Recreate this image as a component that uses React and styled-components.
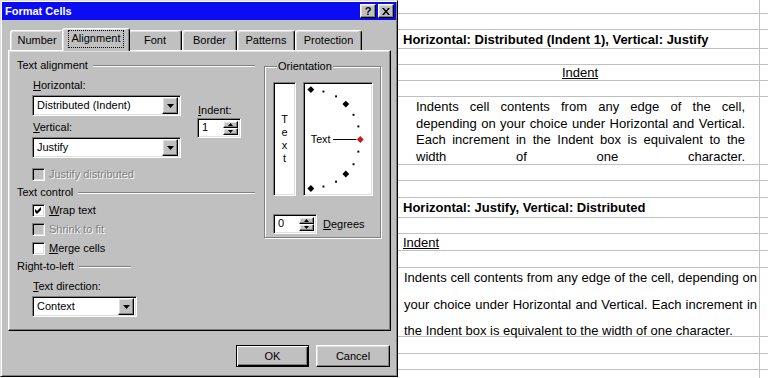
import React from "react";
import styled, { createGlobalStyle, css } from "styled-components";

const GlobalStyle = createGlobalStyle`
  html, body { margin: 0; padding: 0; background: #fff; overflow: hidden; }
  #root { width: 768px; height: 378px; display: flex; overflow: hidden; }
`;

const raised = css`
  border: 1px solid;
  border-color: #fff #000 #000 #fff;
  box-shadow: inset -1px -1px #808080, inset 1px 1px #dfdfdf;
`;
const sunken = css`
  border: 1px solid;
  border-color: #808080 #fff #fff #808080;
  box-shadow: inset 1px 1px #000, inset -1px -1px #dfdfdf;
`;

const Dialog = styled.div`
  flex: none;
  width: 398px;
  height: 377px;
  box-sizing: border-box;
  background: #c0c0c0;
  border: 1px solid;
  border-color: #dfdfdf #000 #000 #dfdfdf;
  box-shadow: inset 1px 1px #fff, inset -1px -1px #808080;
  padding: 1px;
  display: flex;
  flex-direction: column;
  font: 11px "Liberation Sans", Arial, sans-serif;
  line-height: 13px;
  color: #000;
`;

const TitleBar = styled.div`
  height: 18px;
  flex: none;
  background: #0c0cf2;
  display: flex;
  align-items: center;
  justify-content: space-between;
  padding: 0 2px 0 3px;
`;

const Title = styled.span`
  color: #fff;
  font-weight: bold;
  font-size: 11px;
`;

const TitleButtons = styled.div`
  display: flex;
  gap: 2px;
`;

const TitleButton = styled.div`
  width: 16px;
  height: 14px;
  box-sizing: border-box;
  ${raised};
  background: #c0c0c0;
  display: flex;
  align-items: center;
  justify-content: center;
  font-weight: bold;
  font-size: 11px;
  line-height: 12px;
`;

const TabStrip = styled.div`
  margin-top: 8px;
  height: 22px;
  flex: none;
  display: flex;
  align-items: flex-end;
  padding-left: 8px;
`;

const Tab = styled.div`
  box-sizing: border-box;
  width: ${(p) => p.$w}px;
  height: ${(p) => (p.$active ? 23 : 20)}px;
  margin: 0 ${(p) => (p.$active ? -2 : 0)}px ${(p) => (p.$active ? -1 : 0)}px;
  position: relative;
  z-index: ${(p) => (p.$active ? 2 : 1)};
  background: #c0c0c0;
  border-top: 1px solid #fff;
  border-left: 1px solid #fff;
  border-right: 1px solid #000;
  box-shadow: inset -1px 0 #808080, inset 1px 1px #dfdfdf;
  border-radius: 3px 3px 0 0;
  display: flex;
  align-items: center;
  justify-content: center;
  padding-bottom: ${(p) => (p.$active ? 3 : 0)}px;
`;

const FocusLabel = styled.span`
  outline: 1px dotted #000;
  padding: 1px 3px 2px;
`;

const Panel = styled.div`
  box-sizing: border-box;
  margin-left: 6px;
  width: 383px;
  height: 281px;
  flex: none;
  background: #c0c0c0;
  border: 1px solid;
  border-color: #fff #000 #000 #fff;
  box-shadow: inset -1px -1px #808080, inset 1px 1px #dfdfdf;
  display: flex;
  padding: 8px 0 0 8px;
  gap: 9px;
`;

const LeftCol = styled.div`
  width: 238px;
  display: flex;
  flex-direction: column;
`;

const SectionHeader = styled.div`
  display: flex;
  align-items: center;
  gap: 5px;
  height: 13px;
  margin-top: ${(p) => p.$mt || 0}px;
`;

const Etch = styled.span`
  height: 0;
  border-top: 1px solid #808080;
  border-bottom: 1px solid #fff;
  ${(p) => (p.$w ? `width: ${p.$w}px; flex: none;` : "flex: 1;")}
`;

const Indented = styled.div`
  margin-left: 15px;
  display: flex;
  flex-direction: column;
`;

const Label = styled.div`
  height: 13px;
  padding-left: 1px;
  margin-top: ${(p) => p.$mt || 0}px;
  white-space: nowrap;
`;

const AlignRow = styled.div`
  display: flex;
  margin-top: 7px;
`;

const FieldCol = styled.div`
  display: flex;
  flex-direction: column;
`;

const IndentCol = styled.div`
  margin-left: 16px;
  padding-top: 25px;
  display: flex;
  flex-direction: column;
`;

const Combo = styled.div`
  box-sizing: border-box;
  width: ${(p) => p.$w}px;
  height: 21px;
  margin-top: ${(p) => p.$mt || 0}px;
  ${sunken};
  background: #fff;
  display: flex;
  align-items: center;
  padding: 2px;
`;

const FieldText = styled.span`
  flex: 1;
  padding-left: 2px;
  white-space: nowrap;
`;

const DropButton = styled.div`
  width: 16px;
  height: 17px;
  box-sizing: border-box;
  ${raised};
  background: #c0c0c0;
  display: flex;
  align-items: center;
  justify-content: center;
`;

const Spin = styled.div`
  box-sizing: border-box;
  width: 44px;
  height: 20px;
  margin-top: ${(p) => p.$mt || 0}px;
  ${sunken};
  background: #fff;
  display: flex;
  padding: 2px;
`;

const SpinButtons = styled.div`
  width: 15px;
  display: flex;
  flex-direction: column;
`;

const SpinButton = styled.div`
  flex: 1;
  box-sizing: border-box;
  ${raised};
  background: #c0c0c0;
  display: flex;
  align-items: center;
  justify-content: center;
`;

const CheckRow = styled.div`
  display: flex;
  align-items: center;
  gap: 4px;
  height: 13px;
  margin-top: ${(p) => p.$mt || 0}px;
  color: ${(p) => (p.$disabled ? "#808080" : "#000")};
  text-shadow: ${(p) => (p.$disabled ? "1px 1px #fff" : "none")};
`;

const CheckBox = styled.span`
  width: 13px;
  height: 13px;
  box-sizing: border-box;
  flex: none;
  ${sunken};
  background: ${(p) => (p.$disabled ? "#c0c0c0" : "#fff")};
  display: flex;
  align-items: center;
  justify-content: center;
`;

const GroupBox = styled.fieldset`
  box-sizing: border-box;
  margin: 1px 0 0;
  width: 117px;
  height: 178px;
  padding: 9px 0 0 8px;
  border: 1px solid #808080;
  box-shadow: inset 1px 1px #fff, 1px 1px #fff;
  min-width: 0;
`;

const Legend = styled.legend`
  padding: 0 1px;
  margin-left: 4px;
  background: #c0c0c0;
  line-height: 13px;
`;

const OrientRow = styled.div`
  display: flex;
  gap: 7px;
`;

const VerticalBox = styled.div`
  box-sizing: border-box;
  width: 23px;
  height: 114px;
  ${sunken};
  background: #fff;
  display: flex;
  flex-direction: column;
  align-items: center;
  justify-content: center;
`;

const StackLetter = styled.span`
  line-height: 13px;
  height: 13px;
`;

const DialBox = styled.div`
  box-sizing: border-box;
  width: 70px;
  height: 114px;
  ${sunken};
  background: #fff;
  padding: 2px;
  display: flex;
`;

const DegreesRow = styled.div`
  display: flex;
  align-items: center;
  gap: 6px;
  margin-top: 18px;
`;

const Footer = styled.div`
  display: flex;
  justify-content: flex-end;
  gap: 7px;
  margin-top: 14px;
  padding-right: 6px;
`;

const Button = styled.div`
  box-sizing: border-box;
  width: ${(p) => p.$w}px;
  height: 22px;
  background: #c0c0c0;
  display: flex;
  align-items: center;
  justify-content: center;
  ${(p) =>
    p.$default
      ? css`
          border: 1px solid #000;
          box-shadow: inset 1px 1px #fff, inset -1px -1px #000, inset -2px -2px #808080;
        `
      : raised};
`;

/* Spreadsheet */
const Sheet = styled.div`
  flex: 1;
  background: #fff;
  display: flex;
  flex-direction: column;
  overflow: hidden;
  font: 13px "Liberation Sans", Arial, sans-serif;
  color: #000;
`;

const Row = styled.div`
  flex: none;
  height: ${(p) => p.$h}px;
  box-sizing: border-box;
  border-bottom: 1px solid #c0c0c0;
  display: flex;
`;

const Cell = styled.div`
  width: 362px;
  flex: none;
  box-sizing: border-box;
  border-right: 1px solid #c0c0c0;
  display: flex;
  align-items: center;
  justify-content: ${(p) => (p.$center ? "center" : "flex-start")};
  padding: 0 2px 0 5px;
  line-height: 15px;
  font-weight: ${(p) => (p.$bold ? "bold" : "normal")};
  white-space: nowrap;
`;

const ParaCell = styled.div`
  width: 362px;
  flex: none;
  box-sizing: border-box;
  border-right: 1px solid #c0c0c0;
  display: flex;
  flex-direction: column;
  gap: ${(p) => p.$gap}px;
  padding: ${(p) => p.$pad};
  line-height: ${(p) => p.$lh}px;
`;

const JustLine = styled.div`
  text-align: justify;
  text-align-last: ${(p) => (p.$last ? "left" : "justify")};
  white-space: normal;
`;

const Arrow = ({ up }) => (
  <svg width="7" height="4" viewBox="0 0 7 4">
    <polygon points={up ? "3.5,0 7,4 0,4" : "0,0 7,0 3.5,4"} fill="#000" />
  </svg>
);

const SmallArrow = ({ up }) => (
  <svg width="5" height="3" viewBox="0 0 5 3">
    <polygon points={up ? "2.5,0 5,3 0,3" : "0,0 5,0 2.5,3"} fill="#000" />
  </svg>
);

const CheckMark = () => (
  <svg width="7" height="7" viewBox="0 0 7 7">
    <polygon points="0,2 2,4 6,0 6,3 2,7 0,5" fill="#000" />
  </svg>
);

const Dial = () => {
  const cx = 5;
  const cy = 54;
  const r = 51;
  const big = [90, 45, -45, -90];
  const small = [75, 60, 30, 15, -15, -30, -60, -75];
  const pt = (a) => [cx + r * Math.cos((a * Math.PI) / 180), cy - r * Math.sin((a * Math.PI) / 180)];
  const diamond = (x, y, s = 3.5) => `${x},${y - s} ${x + s},${y} ${x},${y + s} ${x - s},${y}`;
  return (
    <svg width="66" height="110" viewBox="0 0 66 110">
      {big.map((a) => {
        const [x, y] = pt(a);
        return <polygon key={a} points={diamond(x, y)} fill="#000" />;
      })}
      {small.map((a) => {
        const [x, y] = pt(a);
        return <rect key={a} x={Math.round(x) - 1} y={Math.round(y) - 1} width="2" height="2" fill="#000" />;
      })}
      <text x="5" y="58" fontFamily="Liberation Sans, Arial, sans-serif" fontSize="11" fill="#000">
        Text
      </text>
      <line x1="28" y1="54.5" x2="52" y2="54.5" stroke="#000" strokeWidth="1" />
      <polygon points={diamond(56, 54.5)} fill="#c41a1a" />
    </svg>
  );
};

const tabs = [
  { name: "Number", w: 54 },
  { name: "Alignment", w: 68, active: true },
  { name: "Font", w: 54 },
  { name: "Border", w: 55 },
  { name: "Patterns", w: 58 },
  { name: "Protection", w: 67 },
];

export default function App() {
  return (
    <>
      <GlobalStyle />
      <Dialog>
        <TitleBar>
          <Title>Format Cells</Title>
          <TitleButtons>
            <TitleButton>?</TitleButton>
            <TitleButton>
              <svg width="8" height="7" viewBox="0 0 8 7">
                <path d="M0 0h2l2 2.5L6 0h2L5 3.5 8 7H6L4 4.5 2 7H0l3-3.5z" fill="#000" />
              </svg>
            </TitleButton>
          </TitleButtons>
        </TitleBar>

        <TabStrip>
          {tabs.map((t) => (
            <Tab key={t.name} $w={t.w} $active={t.active}>
              {t.active ? <FocusLabel>{t.name}</FocusLabel> : t.name}
            </Tab>
          ))}
        </TabStrip>

        <Panel>
          <LeftCol>
            <SectionHeader>
              <span>Text alignment</span>
              <Etch />
            </SectionHeader>
            <Indented>
              <AlignRow>
                <FieldCol>
                  <Label>
                    <u>H</u>orizontal:
                  </Label>
                  <Combo $w={149} $mt={3}>
                    <FieldText>Distributed (Indent)</FieldText>
                    <DropButton>
                      <Arrow />
                    </DropButton>
                  </Combo>
                  <Label $mt={5}>
                    <u>V</u>ertical:
                  </Label>
                  <Combo $w={149} $mt={3}>
                    <FieldText>Justify</FieldText>
                    <DropButton>
                      <Arrow />
                    </DropButton>
                  </Combo>
                </FieldCol>
                <IndentCol>
                  <Label>
                    <u>I</u>ndent:
                  </Label>
                  <Spin $mt={1}>
                    <FieldText>1</FieldText>
                    <SpinButtons>
                      <SpinButton>
                        <SmallArrow up />
                      </SpinButton>
                      <SpinButton>
                        <SmallArrow />
                      </SpinButton>
                    </SpinButtons>
                  </Spin>
                </IndentCol>
              </AlignRow>
              <CheckRow $mt={10} $disabled>
                <CheckBox $disabled />
                <span>Justify distributed</span>
              </CheckRow>
            </Indented>

            <SectionHeader $mt={5}>
              <span>Text control</span>
              <Etch />
            </SectionHeader>
            <Indented>
              <CheckRow $mt={5}>
                <CheckBox>
                  <CheckMark />
                </CheckBox>
                <span>
                  <u>W</u>rap text
                </span>
              </CheckRow>
              <CheckRow $mt={6} $disabled>
                <CheckBox $disabled />
                <span>Shrink to fit</span>
              </CheckRow>
              <CheckRow $mt={6}>
                <CheckBox />
                <span>
                  <u>M</u>erge cells
                </span>
              </CheckRow>
            </Indented>

            <SectionHeader $mt={5}>
              <span>Right-to-left</span>
              <Etch $w={52} />
            </SectionHeader>
            <Indented>
              <Label $mt={7}>
                <u>T</u>ext direction:
              </Label>
              <Combo $w={105} $mt={3}>
                <FieldText>Context</FieldText>
                <DropButton>
                  <Arrow />
                </DropButton>
              </Combo>
            </Indented>
          </LeftCol>

          <GroupBox>
            <Legend>Orientation</Legend>
            <OrientRow>
              <VerticalBox>
                {["T", "e", "x", "t"].map((c) => (
                  <StackLetter key={c}>{c}</StackLetter>
                ))}
              </VerticalBox>
              <DialBox>
                <Dial />
              </DialBox>
            </OrientRow>
            <DegreesRow>
              <Spin>
                <FieldText>0</FieldText>
                <SpinButtons>
                  <SpinButton>
                    <SmallArrow up />
                  </SpinButton>
                  <SpinButton>
                    <SmallArrow />
                  </SpinButton>
                </SpinButtons>
              </Spin>
              <span>
                <u>D</u>egrees
              </span>
            </DegreesRow>
          </GroupBox>
        </Panel>

        <Footer>
          <Button $w={73} $default>
            OK
          </Button>
          <Button $w={74}>Cancel</Button>
        </Footer>
      </Dialog>

      <Sheet>
        <Row $h={14}>
          <Cell />
        </Row>
        <Row $h={16}>
          <Cell />
        </Row>
        <Row $h={19}>
          <Cell $bold>Horizontal: Distributed (Indent 1), Vertical: Justify</Cell>
        </Row>
        <Row $h={16}>
          <Cell />
        </Row>
        <Row $h={16}>
          <Cell $center>
            <u>Indent</u>
          </Cell>
        </Row>
        <Row $h={16}>
          <Cell />
        </Row>
        <Row $h={68}>
          <ParaCell $pad="2px 14px 0 18px" $lh={16.5} $gap={0}>
            <JustLine>Indents cell contents from any edge of the cell,</JustLine>
            <JustLine>depending on your choice under Horizontal and Vertical.</JustLine>
            <JustLine>Each increment in the Indent box is equivalent to the</JustLine>
            <JustLine>width of one character.</JustLine>
          </ParaCell>
        </Row>
        <Row $h={16}>
          <Cell />
        </Row>
        <Row $h={17}>
          <Cell />
        </Row>
        <Row $h={20}>
          <Cell $bold>Horizontal: Justify, Vertical: Distributed</Cell>
        </Row>
        <Row $h={16}>
          <Cell />
        </Row>
        <Row $h={17}>
          <Cell>
            <u>Indent</u>
          </Cell>
        </Row>
        <Row $h={17}>
          <Cell />
        </Row>
        <Row $h={69}>
          <ParaCell $pad="2px 2px 0 6px" $lh={16} $gap={10.5}>
            <JustLine>Indents cell contents from any edge of the cell, depending on</JustLine>
            <JustLine>your choice under Horizontal and Vertical. Each increment in</JustLine>
            <JustLine $last>the Indent box is equivalent to the width of one character.</JustLine>
          </ParaCell>
        </Row>
        <Row $h={17}>
          <Cell />
        </Row>
        <Row $h={16}>
          <Cell />
        </Row>
        <Row $h={20}>
          <Cell />
        </Row>
      </Sheet>
    </>
  );
}
